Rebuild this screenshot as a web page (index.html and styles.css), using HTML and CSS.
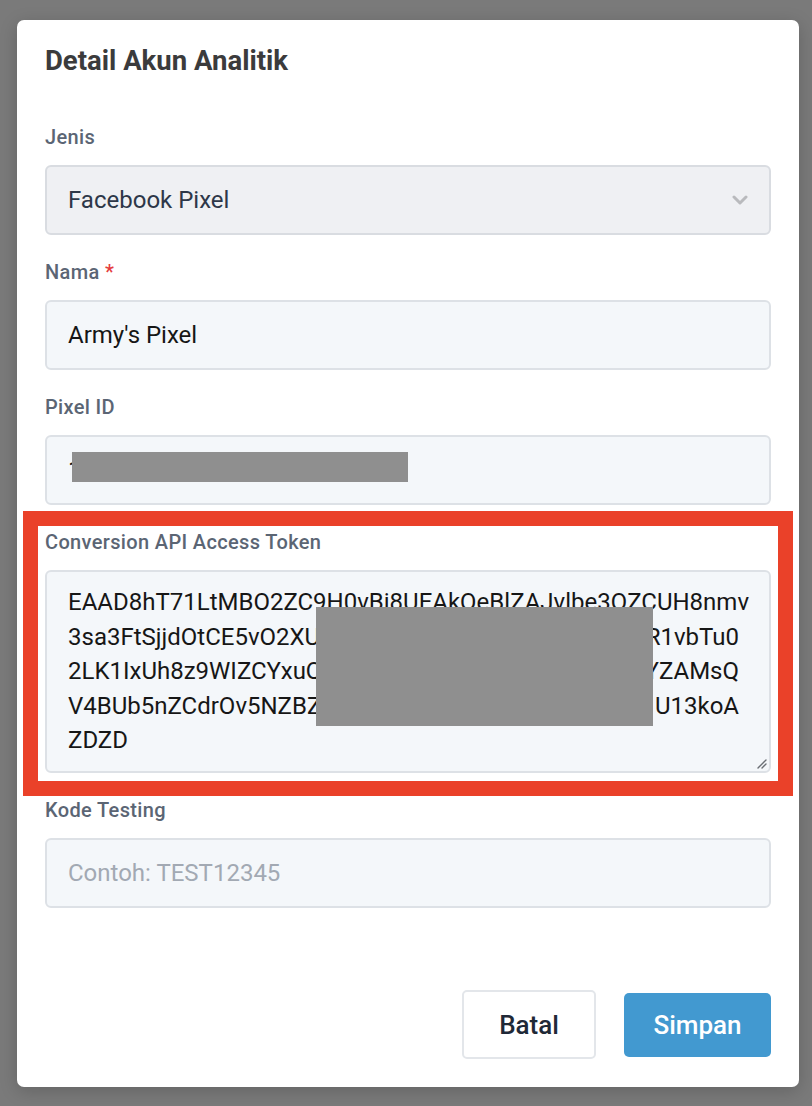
FILE: index.html
```html
<!DOCTYPE html>
<html lang="id">
<head>
<meta charset="utf-8">
<title>Detail Akun Analitik</title>
<link rel="stylesheet" href="styles.css">
</head>
<body>
<div class="modal">
  <h1 class="title">Detail Akun Analitik</h1>

  <div class="field">
    <label class="label">Jenis</label>
    <div class="control select">
      <span class="value-dark">Facebook Pixel</span>
      <svg class="chevron" width="16" height="10" viewBox="0 0 16 10"><path d="M2 2 L8 8 L14 2" fill="none" stroke="#b9babd" stroke-width="3" stroke-linecap="round" stroke-linejoin="round"/></svg>
    </div>
  </div>

  <div class="field">
    <label class="label">Nama <span class="req">*</span></label>
    <div class="control input"><span class="value">Army's Pixel</span></div>
  </div>

  <div class="field">
    <label class="label">Pixel ID</label>
    <div class="control input redact-host">
      <span class="value">1</span>
      <div class="redact redact-id"></div>
    </div>
  </div>

  <div class="field">
    <label class="label">Conversion API Access Token</label>
    <div class="textarea redact-host">
      <div class="line">EAAD8hT71LtMBO2ZC9H0vBi8UEAkQeBlZAJvlbe3QZCUH8nmv</div>
      <div class="line split"><span>3sa3FtSjjdOtCE5vO2XU</span><span>R1vbTu0</span></div>
      <div class="line split"><span>2LK1IxUh8z9WIZCYxuQ</span><span>YZAMsQ</span></div>
      <div class="line split"><span>V4BUb5nZCdrOv5NZBZ</span><span>U13koA</span></div>
      <div class="line">ZDZD</div>
      <div class="redact redact-token"></div>
      <svg class="grip" width="12" height="12" viewBox="0 0 12 12"><path d="M11 3 L3 11 M11 7 L7 11" stroke="#6b6f75" stroke-width="1.4" stroke-linecap="round"/></svg>
    </div>
  </div>

  <div class="field">
    <label class="label">Kode Testing</label>
    <div class="control input"><span class="placeholder">Contoh: TEST12345</span></div>
  </div>

  <div class="actions">
    <button class="btn btn-cancel">Batal</button>
    <button class="btn btn-save">Simpan</button>
  </div>

  <div class="highlight"></div>
</div>
</body>
</html>
```

FILE: styles.css
```css
html, body {
  margin: 0;
  padding: 0;
}
body {
  background: #7a7a7a;
  width: 812px;
  height: 1106px;
  font-family: Roboto, "Noto Sans", "Liberation Sans", sans-serif;
  padding-top: 20px;
  box-sizing: border-box;
}
.modal {
  position: relative;
  margin-left: 17px;
  width: 782px;
  height: 1067px;
  box-sizing: border-box;
  background: #ffffff;
  border-radius: 7px;
  padding: 24px 28px 28px;
  display: flex;
  flex-direction: column;
  box-shadow: 0 4px 18px rgba(0,0,0,0.18);
}
.title {
  margin: 0 0 47px;
  font-size: 27.5px;
  line-height: 34px;
  font-weight: 700;
  color: #3b3b3c;
}
.field {
  display: flex;
  flex-direction: column;
  margin-bottom: 25px;
}
.label {
  font-size: 20px;
  line-height: 24px;
  font-weight: 500;
  letter-spacing: 0.35px;
  color: #5b6574;
  margin-bottom: 16px;
}
.req {
  color: #e53e3e;
}
.control {
  height: 70px;
  box-sizing: border-box;
  border: 2px solid #dde1e6;
  border-radius: 6px;
  display: flex;
  align-items: center;
  padding: 0 21px;
  font-size: 24px;
}
.select {
  background: #eff0f3;
  border-color: #d9dce1;
  justify-content: space-between;
  padding-right: 21px;
}
.input {
  background: #f4f7fa;
}
.value-dark {
  color: #2d3748;
}
.value {
  color: #161616;
}
.placeholder {
  color: #a2a9b3;
}
.redact-host {
  position: relative;
}
.redact {
  position: absolute;
  background: #8f8f8f;
}
.redact-id {
  left: 25px;
  top: 15px;
  width: 336px;
  height: 30px;
}
.textarea {
  height: 203px;
  box-sizing: border-box;
  border: 2px solid #dde1e6;
  border-radius: 6px;
  background: #f4f7fa;
  padding: 13px 26px 0 21px;
  font-size: 24px;
  line-height: 34.5px;
  color: #161616;
}
.line {
  white-space: nowrap;
}
.split {
  display: flex;
  justify-content: space-between;
  padding-right: 4px;
}
.redact-token {
  left: 269px;
  top: 35px;
  width: 337px;
  height: 119px;
}
.grip {
  position: absolute;
  right: 2px;
  bottom: 2px;
}
.actions {
  margin-top: auto;
  display: flex;
  justify-content: flex-end;
  align-items: center;
  gap: 28px;
}
.btn {
  font-family: Roboto, "Noto Sans", "Liberation Sans", sans-serif;
  font-size: 26px;
  font-weight: 500;
  border-radius: 5px;
  cursor: pointer;
}
.btn-cancel {
  width: 134px;
  height: 69px;
  background: #ffffff;
  border: 2px solid #e3e6ea;
  color: #1f2937;
}
.btn-save {
  width: 147px;
  height: 64px;
  background: #4299d0;
  border: none;
  color: #ffffff;
}
.highlight {
  position: absolute;
  left: 6px;
  top: 491px;
  width: 770px;
  height: 285px;
  box-sizing: border-box;
  border: 15px solid #ea4129;
  pointer-events: none;
}
```
